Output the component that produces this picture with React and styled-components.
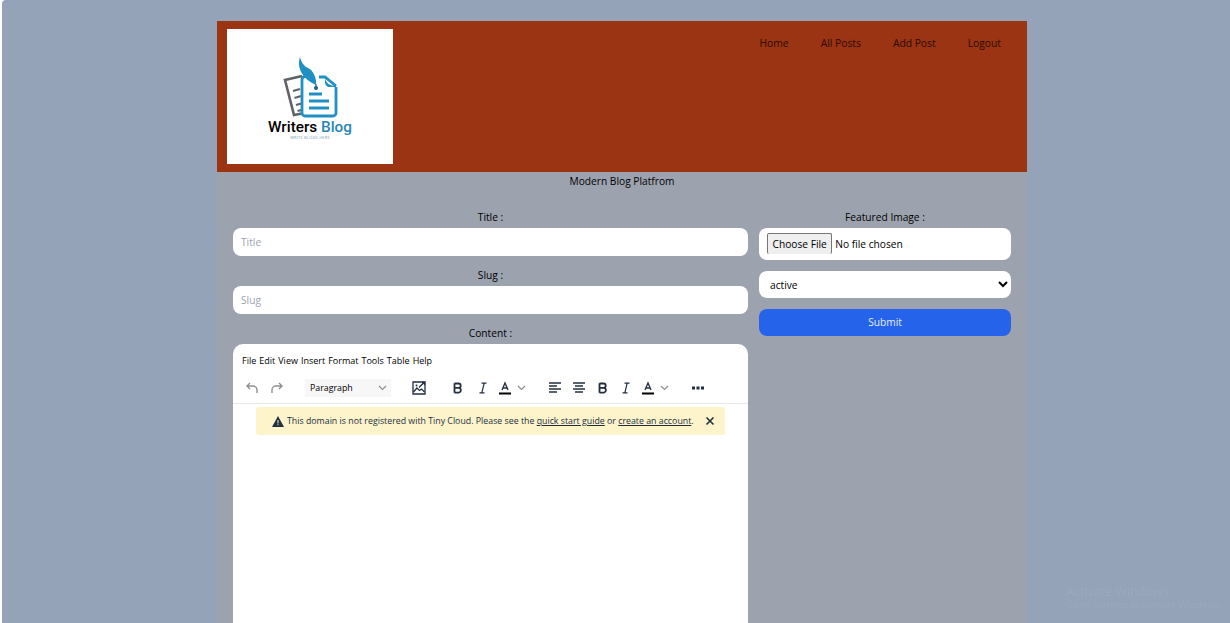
import React from 'react'
import styled, { createGlobalStyle } from 'styled-components'

const Global = createGlobalStyle`
  html, body { margin: 0; padding: 0; height: 623px; overflow: hidden; background: #fff; }
  body { font-family: "Open Sans", "Noto Sans", sans-serif; font-size: 10.2px; color: #000; }
  * { box-sizing: border-box; }
`

const Page = styled.div`
  margin-left: 2px;
  height: 623px;
  padding-top: 21px;
  background: #94a3b8;
  border-top-left-radius: 4px;
  overflow: hidden;
`

const Shell = styled.div`
  width: 810px;
  margin-left: 215px;
  min-height: 602px;
  background: #9ca3af;
`

const Header = styled.header`
  display: flex;
  justify-content: space-between;
  align-items: flex-start;
  height: 151px;
  padding: 8px 10px;
  background: #9a3412;
`

const LogoBox = styled.div`
  display: flex;
  flex-direction: column;
  align-items: center;
  width: 166px;
  height: 135px;
  padding-top: 27px;
  background: #fff;
  svg { margin-left: 2px; }
`

const LogoName = styled.div`
  margin-top: -1px;
  font-family: Roboto, "Liberation Sans", sans-serif;
  font-weight: 500;
  font-size: 15.3px;
  line-height: 16px;
  white-space: nowrap;
  span { color: #2a86b5; }
`

const LogoTag = styled.div`
  font-size: 4px;
  line-height: 5px;
  color: #7b9cb4;
  letter-spacing: 0.2px;
`

const Nav = styled.nav`
  display: flex;
  gap: 32px;
  padding: 6px 16px 0 0;
`

const NavLink = styled.a`
  font-size: 10.3px;
  line-height: 16px;
  color: #2c0b06;
`

const Tagline = styled.p`
  margin: 0;
  padding-top: 1px;
  text-align: center;
  line-height: 16px;
`

const Form = styled.form`
  display: grid;
  grid-template-columns: 515px 252px;
  column-gap: 11px;
  padding: 20px 16px 0;
`

const Column = styled.div`
  display: flex;
  flex-direction: column;
`

const Label = styled.label`
  display: block;
  height: 19px;
  padding-top: 1px;
  line-height: 14px;
  text-align: center;
`

const TextInput = styled.input`
  display: block;
  width: 100%;
  height: 28px;
  margin-bottom: 11px;
  padding: 0 8px;
  border: 0;
  border-radius: 8px;
  background: #fff;
  font: 10.2px "Open Sans", sans-serif;
  &::placeholder { color: #9ca3af; }
`

const FileInput = styled.input`
  display: block;
  width: 100%;
  height: 32px;
  margin: 0 0 11px;
  padding: 5px 8px;
  border-radius: 8px;
  background: #fff;
  font: 10.2px "Open Sans", sans-serif;
  &::file-selector-button {
    height: 21px;
    margin-right: 3px;
    padding: 0 4.5px;
    border: 1px solid #767676;
    border-bottom: 0;
    border-radius: 2px;
    background: #efefef;
    font: 10.2px "Open Sans", sans-serif;
  }
`

const StatusSelect = styled.select`
  display: block;
  width: 100%;
  height: 27px;
  margin-bottom: 11px;
  padding: 0 0 0 7px;
  border: 0;
  border-radius: 8px;
  background: #fff;
  font: 10.2px "Open Sans", sans-serif;
`

const SubmitButton = styled.button`
  width: 100%;
  height: 27px;
  padding: 0 0 2px;
  border: 0;
  border-radius: 8px;
  background: #2563eb;
  color: #e8eefc;
  font: 10.2px "Open Sans", sans-serif;
`

const Editor = styled.div`
  height: 500px;
  border-radius: 10px;
  background: #fff;
`

const MenuBar = styled.div`
  display: flex;
  gap: 3px;
  height: 32px;
  padding: 9px 0 0 9px;
  font-size: 9px;
  line-height: 16px;
`

const ToolBar = styled.div`
  display: flex;
  align-items: center;
  height: 27px;
  padding: 0 0 4px 7px;
  box-shadow: 0 1px 0 #e8e8e8;
`

const Tool = styled.span`
  display: flex;
  align-items: center;
  justify-content: center;
  flex: none;
  width: 24px;
  height: 18px;
  margin-left: ${p => p.$gap || 0}px;
  color: ${p => (p.$muted ? '#8f8f8f' : '#222f3e')};
`

const SplitTool = styled(Tool)`
  justify-content: flex-start;
  gap: 6px;
  width: 38px;
  padding-left: 4px;
`

const BlockSelect = styled.span`
  display: flex;
  align-items: center;
  justify-content: space-between;
  flex: none;
  width: 86px;
  height: 18px;
  margin-left: 16px;
  padding: 0 4px 0 5px;
  background: #f7f7f7;
  font-size: 8.8px;
`

const Notice = styled.div`
  display: flex;
  align-items: center;
  height: 28px;
  margin: 4px 23px 0;
  padding: 0 10px 0 16px;
  border-radius: 3px;
  background: #fdf4cc;
  color: #222f3e;
  font-size: 8.8px;
  white-space: nowrap;
  svg { flex: none; }
  a { color: #222f3e; text-decoration: underline; }
`

const NoticeText = styled.span`
  flex: 1;
  margin-left: 3px;
`

const Activation = styled.div`
  position: fixed;
  left: 1066px;
  top: 584px;
  color: rgba(255, 255, 255, 0.07);
  white-space: nowrap;
  font-size: 9.5px;
  line-height: 12px;
  strong { display: block; font-size: 12.5px; line-height: 15px; font-weight: 400; }
`

const Logo = () => (
  <svg width="56" height="64" viewBox="0 0 56 64" fill="none">
    <path d="M19 20L2 24l9 35 8-1.5" stroke="#5f6267" strokeWidth="2.6" />
    <path d="M10 35l7-2M11.5 42l6.5-2M13 49l5.5-1.5M14.5 55l4-1" stroke="#5f6267" strokeWidth="2.2" />
    <path d="M28 20.5h-6a3 3 0 0 0-3 3V57a3 3 0 0 0 3 3h28a3 3 0 0 0 3-3V31" stroke="#1f8fc4" strokeWidth="2.8" />
    <path d="M36 21h6l11 9" stroke="#1f8fc4" strokeWidth="2.8" />
    <path d="M42 22c1 5 5 8 11 8v1H47c-3 0-5-2-5-5z" fill="#1f8fc4" />
    <path d="M26 38h13M26 45h20M26 52h20" stroke="#1f8fc4" strokeWidth="2.8" />
    <path d="M17 1c-3 8 0 19 12 26l4 2c1-7-3-15-8-17-4-2-7-6-8-11z" fill="#1f8fc4" />
    <path d="M33 28v3" stroke="#1f5f80" strokeWidth="1.2" />
    <circle cx="33" cy="32" r="2" fill="#1f5f80" />
  </svg>
)

const Undo = ({ flip }) => (
  <svg width="14" height="14" viewBox="0 0 14 14" fill="none" stroke="currentColor" strokeWidth="1.4" style={flip ? { transform: 'scaleX(-1)' } : undefined}>
    <path d="M5 2L2 5l3 3M2 5h6a4 4 0 0 1 4 4v3" />
  </svg>
)

const Chevron = () => (
  <svg width="9" height="6" viewBox="0 0 9 6" fill="none" stroke="#8a8f96" strokeWidth="1.2">
    <path d="M1 1l3.5 3.5L8 1" />
  </svg>
)

const ImageIcon = () => (
  <svg width="14" height="14" viewBox="0 0 14 14" fill="none" stroke="#222f3e" strokeWidth="1.3">
    <path d="M1 1h12v12H1z" />
    <path d="M1.5 11l3.5-4 2.5 2.5L9.5 8l3 3" />
    <circle cx="4.5" cy="4.5" r="1" fill="#222f3e" stroke="none" />
    <path d="M7 6.5l5-5M10 1.5h2.5V4" />
  </svg>
)

const BoldIcon = () => (
  <svg width="12" height="12" viewBox="0 0 12 12" fill="none" stroke="#222f3e" strokeWidth="1.8">
    <path d="M2.5 1.2v9.6M2.5 1.5h4a2.2 2.2 0 0 1 0 4.4h-4M2.5 5.9h4.5a2.4 2.4 0 0 1 0 4.7H2.5" />
  </svg>
)

const ItalicIcon = () => (
  <svg width="12" height="12" viewBox="0 0 12 12" fill="none" stroke="#222f3e" strokeWidth="1.2">
    <path d="M4.5 1.2h5M2.5 10.8h5M7.2 1.2L4.8 10.8" />
  </svg>
)

const ColorIcon = () => (
  <svg width="12" height="14" viewBox="0 0 12 14" fill="none" stroke="#222f3e">
    <path d="M3 9l3-7 3 7M4 7h4" strokeWidth="1.3" />
    <path d="M0 12.5h12" stroke="#000" strokeWidth="2" />
  </svg>
)

const AlignIcon = ({ center }) => (
  <svg width="12" height="11" viewBox="0 0 12 11" stroke="#222f3e" strokeWidth="1.5">
    <path d="M0 1h12" />
    <path d={center ? 'M2 4h8' : 'M0 4h8'} />
    <path d="M0 7h12" />
    <path d={center ? 'M2 10h8' : 'M0 10h8'} />
  </svg>
)

const MoreIcon = () => (
  <svg width="12" height="4" viewBox="0 0 12 4" fill="#222f3e">
    <rect x="0" y="0.5" width="3" height="3" />
    <rect x="4.5" y="0.5" width="3" height="3" />
    <rect x="9" y="0.5" width="3" height="3" />
  </svg>
)

const WarningIcon = () => (
  <svg width="12" height="11" viewBox="0 0 12 11">
    <path d="M6 0l6 11H0z" fill="#222f3e" />
    <path d="M5.5 4h1v3.5h-1zM5.5 8.3h1v1h-1z" fill="#fdf4cc" />
  </svg>
)

const CloseIcon = () => (
  <svg width="10" height="10" viewBox="0 0 10 10" stroke="#222f3e" strokeWidth="1.6">
    <path d="M1.5 1.5l7 7M8.5 1.5l-7 7" />
  </svg>
)

const navItems = ['Home', 'All Posts', 'Add Post', 'Logout']
const menuItems = ['File', 'Edit', 'View', 'Insert', 'Format', 'Tools', 'Table', 'Help']

function App() {
  return (
    <>
      <Global />
      <Page>
        <Shell>
          <Header>
            <LogoBox>
              <Logo />
              <LogoName>Writers <span>Blog</span></LogoName>
              <LogoTag>WRITE BLOGS HERE</LogoTag>
            </LogoBox>
            <Nav>
              {navItems.map(item => <NavLink key={item}>{item}</NavLink>)}
            </Nav>
          </Header>
          <Tagline>Modern Blog Platfrom</Tagline>
          <Form>
            <Column>
              <Label>Title :</Label>
              <TextInput placeholder="Title" />
              <Label>Slug :</Label>
              <TextInput placeholder="Slug" />
              <Label>Content :</Label>
              <Editor>
                <MenuBar>
                  {menuItems.map(item => <span key={item}>{item}</span>)}
                </MenuBar>
                <ToolBar>
                  <Tool $muted><Undo /></Tool>
                  <Tool $muted $gap={1}><Undo flip /></Tool>
                  <BlockSelect>Paragraph <Chevron /></BlockSelect>
                  <Tool $gap={16}><ImageIcon /></Tool>
                  <Tool $gap={15}><BoldIcon /></Tool>
                  <Tool $gap={1}><ItalicIcon /></Tool>
                  <SplitTool><ColorIcon /><Chevron /></SplitTool>
                  <Tool $gap={10}><AlignIcon /></Tool>
                  <Tool><AlignIcon center /></Tool>
                  <Tool><BoldIcon /></Tool>
                  <Tool $gap={-1}><ItalicIcon /></Tool>
                  <SplitTool><ColorIcon /><Chevron /></SplitTool>
                  <Tool $gap={10}><MoreIcon /></Tool>
                </ToolBar>
                <Notice>
                  <WarningIcon />
                  <NoticeText>
                    This domain is not registered with Tiny Cloud. Please see the <a>quick start guide</a> or <a>create an account</a>.
                  </NoticeText>
                  <CloseIcon />
                </Notice>
              </Editor>
            </Column>
            <Column>
              <Label>Featured Image :</Label>
              <FileInput type="file" />
              <StatusSelect defaultValue="active">
                <option value="active">active</option>
                <option value="inactive">inactive</option>
              </StatusSelect>
              <SubmitButton type="button">Submit</SubmitButton>
            </Column>
          </Form>
        </Shell>
        <Activation>
          <strong>Activate Windows</strong>
          Go to Settings to activate Windows.
        </Activation>
      </Page>
    </>
  )
}

export default App
